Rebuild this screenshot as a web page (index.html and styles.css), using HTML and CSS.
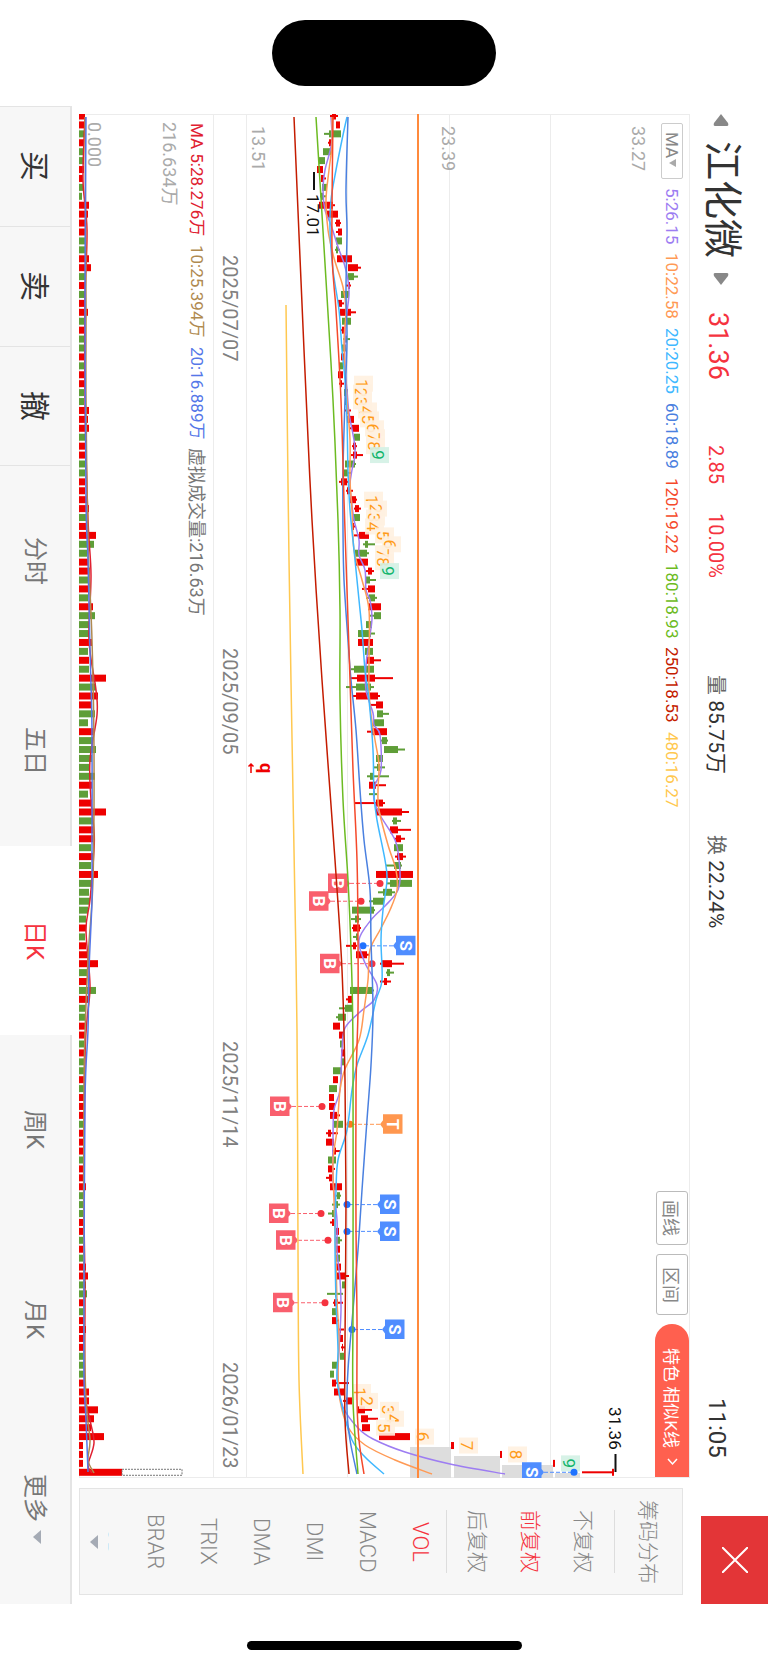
FILE: index.html
```html
<!DOCTYPE html>
<html lang="zh-CN">
<head>
  <meta charset="UTF-8" />
  <meta name="viewport" content="width=device-width, initial-scale=1" />
  <title>江化微 日K</title>
  <link rel="stylesheet" href="styles.css">
</head>
<body>
  <div class="island-area"><div class="island"></div></div>

  <main class="screen">
    <!-- Quote header -->
    <header class="header">
      <div class="quote">
        <button class="arrow" aria-label="上一只"><svg width="16" height="12" viewBox="0 0 16 12"><path d="M8 0 15 9Q16 12 14 12H2Q0 12 1 9Z" /></svg></button>
        <h1 class="name">江化微</h1>
        <button class="arrow" aria-label="下一只"><svg width="16" height="12" viewBox="0 0 16 12"><path d="M8 12 15 3Q16 0 14 0H2Q0 0 1 3Z" /></svg></button>
        <span class="price">31.36</span>
        <span class="change">2.85</span>
        <span class="percent">10.00%</span>
        <span class="stat"><small>量</small> 85.75万</span>
        <span class="stat turnover"><small>换</small> 22.24%</span>
        <time class="clock">11:05</time>
      </div>
      <button class="close" aria-label="关闭">
        <svg width="26" height="26" viewBox="0 0 26 26"><path d="M0 0 26 26M26 0 0 26" /></svg>
      </button>
    </header>

    <div class="workspace">
      <section class="chart">
        <!-- Price -->
        <div class="panel price-panel">
          <svg class="plot" id="pricePlot" viewBox="246 114 444 1364"></svg>
          <div class="legend">
            <label class="ma-picker">
              <select aria-label="指标"><option>MA</option></select>
              <svg width="7" height="8" viewBox="0 0 7 8"><path d="M0 4 7 0V8Z" /></svg>
            </label>
            <span class="ma5">5:26.15</span>
            <span class="ma10">10:22.58</span>
            <span class="ma20">20:20.25</span>
            <span class="ma60">60:18.89</span>
            <span class="ma120">120:19.22</span>
            <span class="ma180">180:18.93</span>
            <span class="ma250">250:18.53</span>
            <span class="ma480">480:16.27</span>
            <div class="tools">
              <button class="tool">画线</button>
              <button class="tool wide">区间</button>
              <button class="similar">特色 相似K线
                <svg width="7" height="11" viewBox="0 0 7 11"><path d="M6 1 1 5.500 6 10" transform="rotate(-90 3.500 5.500)" /></svg>
              </button>
            </div>
          </div>
        </div>

        <div class="dates">
          <time>2025/07/07</time>
          <time>2025/09/05</time>
          <time>2025/11/14</time>
          <time>2026/01/23</time>
        </div>

        <!-- Volume -->
        <div class="panel volume-panel">
          <svg class="plot" id="volumePlot" viewBox="79 114 135 1364"></svg>
          <div class="legend volume-legend">
            <span class="vol5">MA 5:28.276万</span>
            <span class="vol10">10:25.394万</span>
            <span class="vol20">20:16.889万</span>
            <span class="virtual">虚拟成交量:216.63万</span>
          </div>
        </div>
      </section>

      <!-- Indicator list -->
      <aside class="sidebar">
        <button class="side-item first">筹码分布</button>
        <div class="side-group">
          <button class="side-item">不复权</button>
          <button class="side-item on">前复权</button>
          <button class="side-item">后复权</button>
        </div>
        <div class="indicators">
          <button class="side-item on">VOL</button>
          <button class="side-item">MACD</button>
          <button class="side-item">DMI</button>
          <button class="side-item">DMA</button>
          <button class="side-item">TRIX</button>
          <button class="side-item">BRAR</button>
          <button class="side-item cut">CR</button>
        </div>
        <button class="more-down" aria-label="更多指标"><svg width="8" height="14" viewBox="0 0 8 14"><path d="M0 7 8 0V14Z" /></svg></button>
      </aside>
    </div>

    <nav class="bottom">
      <button class="trade">买</button>
      <button class="trade">卖</button>
      <button class="trade">撤</button>
      <button class="tab">分时</button>
      <button class="tab">五日</button>
      <button class="tab active">日K</button>
      <button class="tab">周K</button>
      <button class="tab">月K</button>
      <button class="tab">更多 <svg width="8" height="14" viewBox="0 0 8 14"><path d="M0 7 8 0V14Z" /></svg></button>
    </nav>
  </main>

  <div class="home-area"><div class="home"></div></div>

  <script src="chart.js"></script>
</body>
</html>
```

FILE: styles.css
```css
* {
  box-sizing: border-box;
}
body {
  margin: 0;
  min-height: 100vh;
  display: flex;
  flex-direction: column;
  background: #fff;
  color: #333;
  font-family: Roboto, "Noto Sans CJK SC", sans-serif;
}
button, select {
  writing-mode: inherit;
  text-orientation: inherit;
  font: inherit;
  color: inherit;
  background: none;
  border: 0;
  border-radius: 0;
  margin: 0;
  padding: 0;
  cursor: pointer;
}
svg {
  display: block;
  writing-mode: horizontal-tb;
}

/* phone edges */
.island-area {
  height: 106px;
  padding-top: 20px;
}
.island {
  width: 224px;
  height: 66px;
  margin: 0 auto;
  border-radius: 33px;
  background: #000;
}
.home-area {
  height: 61px;
  padding-top: 37px;
}
.home {
  width: 275px;
  height: 9px;
  margin: 0 auto;
  border-radius: 5px;
  background: #000;
}

/* the app runs sideways: inline = down, block = right to left */
.screen {
  flex: 1;
  display: flex;
  flex-direction: column;
  writing-mode: vertical-rl;
  text-orientation: sideways;
}

.header {
  display: flex;
  block-size: 67px;
}
.quote {
  flex: 1;
  display: flex;
  align-items: baseline;
  padding-block-start: 27px;
  padding-inline-start: 8px;
  line-height: 1;
}
.arrow {
  align-self: center;
}
.arrow svg {
  fill: #888;
}
.name {
  margin-block: 0;
  margin-inline: 15px;
  font-size: 39px;
  font-weight: 400;
}
.price {
  margin-inline-start: 27px;
  font-size: 27px;
}
.price, .change, .percent {
  color: #f5333f;
}
.change {
  margin-inline-start: 65px;
}
.change, .percent {
  font-size: 20px;
}
.percent {
  margin-inline-start: 29px;
}
.stat {
  margin-inline-start: 97px;
  font-size: 21px;
}
.stat small {
  font-size: 20px;
  color: #666;
}
.turnover {
  margin-inline-start: 61px;
}
.clock {
  margin-inline-start: auto;
  margin-inline-end: 58px;
  font-size: 24px;
}
.close {
  inline-size: 88px;
  display: flex;
  align-items: center;
  justify-content: center;
  background: #e33537;
}
.close svg {
  fill: none;
  stroke: #fff;
  stroke-width: 2;
}

.workspace {
  flex: 1;
  display: flex;
  gap: 10px;
  padding-inline: 8px 9px;
  padding-block: 11px 7px;
}
.chart {
  flex: 1;
  display: flex;
  flex-direction: column;
}
.panel {
  position: relative;
  border: 1px solid #ececec;
}
.price-panel {
  block-size: 444px;
}
.volume-panel {
  flex: 1;
}
.plot {
  position: absolute;
  inset: -1px;
  width: calc(100% + 2px);
  height: calc(100% + 2px);
}
.legend {
  position: relative;
  display: flex;
  align-items: center;
  gap: 9px;
  block-size: 34px;
  padding-inline-start: 8px;
  font-size: 17px;
  white-space: nowrap;
}
.ma-picker {
  display: flex;
  align-items: center;
  inline-size: 56px;
  block-size: 22px;
  padding-inline: 8px;
  border: 1px solid #ccc;
  border-radius: 2px;
  color: #888;
}
.ma-picker select {
  appearance: none;
}
.ma-picker svg {
  fill: #aaa;
}
.ma5 { color: #9d7df2; }
.ma10 { color: #ff9a55; }
.ma20 { color: #40b8ff; }
.ma60 { color: #4a80e0; }
.ma120 { color: #f5492a; }
.ma180 { color: #6cbb22; }
.ma250 { color: #c41c00; }
.ma480 { color: #ffc850; }
.tools {
  display: flex;
  align-items: center;
  gap: 9px;
  margin-inline-start: auto;
  color: #888;
}
.tool {
  inline-size: 54px;
  block-size: 32px;
  border: 1px solid #bbb;
  border-radius: 3px;
  font-size: 18px;
}
.tool.wide {
  inline-size: 61px;
}
.similar {
  display: flex;
  align-items: center;
  gap: 8px;
  inline-size: 153px;
  block-size: 34px;
  padding-inline-start: 24px;
  border-start-start-radius: 17px;
  border-end-start-radius: 17px;
  background: #ff604f;
  color: #fff;
}
.similar svg, .close svg {
  flex: none;
}
.similar svg {
  fill: none;
  stroke: #fff;
  stroke-width: 1.5;
  overflow: visible;
}
.dates {
  display: grid;
  grid-template-columns: 393px 393px 1fr auto;
  align-items: center;
  block-size: 32px;
  padding-inline: 140px 9px;
  border-inline: 1px solid #ececec;
  font-size: 20px;
  color: #808080;
}
.volume-legend {
  block-size: 30px;
}
.vol5 { color: #e02030; }
.vol10 { color: #b08a50; }
.vol20 { color: #5577e8; }
.virtual {
  color: #777;
  font-size: 18px;
}

.sidebar {
  inline-size: 107px;
  margin-block-start: 7px;
  display: flex;
  flex-direction: column;
  align-items: center;
  border: 1px solid #e4e4e4;
  background: #f7f7f7;
  color: #888;
  font-size: 21px;
  font-weight: 300;
}
.side-item {
  display: block;
  inline-size: 100%;
  block-size: 53px;
  padding-block-end: 2px;
  text-align: center;
}
.side-item.first {
  block-size: 67px;
}
.side-item.on {
  color: #f5333f;
}
.side-group {
  padding-block: 4px;
  border-block: 1px solid #ddd;
}
.indicators .side-item {
  font-size: 22px;
}
.indicators .cut {
  block-size: 20px;
  line-height: 58px;
  overflow: hidden;
}
.more-down {
  margin-block-start: 10px;
}
.more-down svg, .tab svg {
  fill: #a5abb5;
}

.bottom {
  display: flex;
  block-size: 72px;
  background: #f7f7f7;
  border-inline-start: 1px solid #e4e4e4;
}
.trade, .tab {
  border-block-start: 2px solid #e4e4e4;
  padding-block-end: 4px;
}
.trade {
  flex: 119 1 0;
  border-inline-end: 1px solid #e4e4e4;
  font-size: 30px;
}
.tab {
  flex: 190 1 0;
  display: flex;
  align-items: center;
  justify-content: center;
  gap: 8px;
  color: #777;
  font-size: 24px;
}
.tab.active {
  background: #fff;
  border-color: #fff;
  color: #f5333f;
}

/* chart marks */
.up { fill: #ee0000; }
.down { fill: #5f9e38; }
.grid { stroke: #ececec; }
.ma-line {
  fill: none;
  stroke-width: 1.5;
}
.axis-text {
  fill: #aaa;
  font-size: 18px;
}
.point-text {
  fill: #111;
  font-size: 17px;
}
.count-text {
  font-size: 17px;
  text-anchor: middle;
}
.flag-text {
  fill: #fff;
  font-size: 17px;
  font-weight: 700;
  text-anchor: middle;
}
.right-text {
  fill: #ee0000;
  font-size: 18px;
  font-weight: 700;
  text-anchor: middle;
}
```

FILE: chart.js
```js
const STEP = 8.923;
const FIRST = 116;
const rowY = i => FIRST + i * STEP;

// colour, body low, body high, wick low, wick high
const candles = `
r 332 336 330 338|r 336 340|g 329 341 324 341|r 329 332 328 333|g 323 331|g 319 325|r 317 323|r 321 324 321 326|g 322 327|g 321 323 320 326
r 319 333 319 335|r 326 338|r 336 340 335 341|r 338 342 336 342|g 336 342|g 336 338 335 340|r 337 352|r 348 358 348 361|g 348 354 348 358|r 348 350 346 351
g 341 349|r 338 342 338 344|r 340 351 340 356|g 342 351|r 342 344 341 346|g 345 347 343 350|g 342 346|r 341 344|g 339 343|r 338 343
r 340 342 339 344|g 344 348|g 345 348|r 347 349 345 351|r 347 354|r 352 359 350 359|g 354 360|r 353 356 352 357|r 353 357 351 363|g 345 355 345 356
g 344 348 344 352|r 341 347 339 348|r 347 350 346 353|r 350 356 349 357|r 355 359 354 361|g 353 360|r 352 354 351 356|r 359 369 354 369|g 365 368 363 375|g 355 367 355 369
r 355 368|r 368 372 366 374|g 366 370 366 376|r 368 375 362 375|g 369 375 366 377|r 368 381|g 374 381 369 381|g 366 372|g 358 371 358 375|r 358 373
g 365 373|r 366 374 366 381|g 354 374 351 374|r 357 375 350 393|g 356 371 346 374|r 356 378 352 380|r 376 383 371 383|g 377 383 377 389|g 373 384|r 372 387 367 387
g 382 387 381 388|g 384 398 384 405|g 376 383|g 377 380 374 385|g 370 374 367 389|r 369 376 369 386|g 373 375 369 377|r 376 383 355 385|r 376 402 376 409|g 393 397 392 401
r 390 398 389 411|r 396 401 394 405|g 394 403|r 397 403 395 406|g 394 401 386 402|r 376 413|g 390 412 387 412|g 383 392 378 395|g 373 384 369 384|g 352 374 352 375
g 355 359 351 361|r 353 360 352 361|g 356 358 353 358|r 353 356 346 357|r 356 367 356 370|r 382 392 380 404|g 387 390 386 394|r 384 387 380 391|g 350 373 350 374|r 348 352 346 353
g 345 353 339 353|g 338 346 336 346|r 333 340|r 339 343|g 340 342|r 341 344|g 342 344|g 333 342|r 333 338|g 329 337
r 329 334|r 329 335|r 330 337 330 340|g 334 343|r 328 331 326 338|r 326 334|r 334 336 332 340|g 328 336|r 328 333 328 335|r 329 332 326 332
r 330 342|g 337 340 336 341|g 335 338 332 340|g 332 334 328 335|r 332 334 330 335|r 336 339|g 336 340 336 342|r 336 340|g 336 340|r 336 341
r 337 346 337 349|g 342 346|g 335 336 327 343|r 334 338 333 343|g 332 336|r 332 337 332 339|r 340 341 338 344|r 339 343|r 342 343 341 345|g 340 344
g 332 338|g 330 334|r 332 336 332 349|r 334 345|r 346 352 343 352|r 358 365 358 372|r 361 368 361 378|r 362 370|r 379 410|r 451 454
r 500 502|r 553 555|r 612 614 582 614
`.trim().split(/[\n|]/).map(row => {
  const [color, ...n] = row.split(' ');
  const [lo, hi, wickLo = lo, wickHi = hi] = n.map(Number);
  return { up: color === 'r', lo, hi, wickLo, wickHi };
});

// right edge of every volume bar, the base is 79
const volumes = [
  85, 84, 84, 84, 84, 84, 84, 83, 83, 82, 89, 88, 86, 86, 85, 85, 89, 91, 85, 85,
  85, 85, 88, 85, 85, 84, 84, 84, 85, 84, 85, 84, 84, 89, 88, 89, 85, 85, 85, 85,
  85, 85, 85, 88, 89, 86, 86, 96, 94, 87, 88, 90, 89, 88, 88, 93, 95, 90, 89, 92,
  88, 89, 89, 106, 96, 98, 92, 95, 88, 94, 93, 96, 92, 89, 95, 92, 88, 92, 106, 93,
  94, 95, 91, 93, 91, 98, 92, 89, 90, 88, 86, 86, 85, 86, 88, 98, 88, 87, 96, 88,
  86, 86, 85, 85, 84, 84, 84, 84, 84, 84, 84, 84, 85, 84, 84, 84, 84, 84, 84, 84,
  86, 83, 83, 83, 83, 83, 83, 83, 83, 86, 88, 86, 87, 85, 85, 85, 86, 85, 85, 84,
  84, 84, 86, 89, 89, 98, 94, 91, 104, 83, 83, 83, 122
];

const priceLines = [
  ['#ffc850', '286,305 289,560 294,850 297,1030 298,1250 299,1380 303,1474'],
  ['#9d7df2', '331,117 332,140 329,155 325,170 323,190 325,210 331,225 338,247 344,263 348,280 349,295 346,320 345,340 345,370 347,390 349,413 354,440 355,455 352,470 350,485 352,505 354,520 359,540 359,555 365,570 366,590 370,600 372,618 370,635 368,650 366,665 366,690 373,713 374,725 380,735 381,770 375,785 374,800 380,815 395,840 399,860 400,880 397,892 386,905 371,920 359,940 365,963 377,985 374,1000 360,1012 345,1028 342,1050 340,1090 334,1110 333,1140 333,1180 337,1220 337,1250 340,1280 341,1310 339,1350 338,1380 343,1407 358,1428 373,1439 405,1452 450,1464 505,1474'],
  ['#ff9a55', '332,117 332,145 329,170 326,200 328,230 334,258 343,287 346,310 344,340 345,370 347,400 350,440 350,480 352,510 354,550 362,580 369,610 369,660 369,690 371,715 375,740 379,765 378,790 379,810 388,845 396,870 397,890 390,910 380,930 370,950 368,980 364,1010 359,1040 345,1069 340,1090 337,1130 333,1160 334,1200 336,1260 337,1300 339,1340 338,1370 340,1400 348,1427 365,1445 395,1460 432,1474'],
  ['#40b8ff', '347,117 343,135 336,170 331,200 330,230 333,270 339,310 342,350 345,380 347,420 348,470 350,510 354,550 359,600 362,630 365,670 369,700 373,750 374,795 377,820 385,860 387,880 383,910 381,940 382,980 376,1000 368,1035 357,1065 352,1090 347,1130 338,1160 336,1190 335,1240 336,1300 338,1350 337,1380 343,1410 352,1440 365,1457 384,1474'],
  ['#4a80e0', '348,117 346,190 347,230 346,290 347,340 345,400 343,470 343,530 344,580 348,640 351,680 356,730 360,790 364,840 370,890 371,940 373,1010 371,1065 367,1120 362,1190 358,1250 353,1310 348,1370 347,1410 350,1440 357,1474'],
  ['#f5492a', '333,117 332,250 336,310 341,400 344,500 347,590 350,680 353,770 357,860 358,940 358,1010 356,1090 356,1230 357,1320 357,1400 359,1440 364,1474'],
  ['#6cbb22', '316,117 326,280 333,400 338,520 340,610 340,700 343,800 348,880 351,950 353,1050 353,1300 353,1400 358,1474'],
  ['#c41c00', '294,117 304,350 312,520 322,680 335,860 342,970 345,1080 346,1200 345,1340 345,1420 349,1474']
];

const volumeLines = [
  ['#e02030', '85,117 83,180 87,230 85,300 85,400 88,520 91,575 89,640 96,690 97,715 90,760 91,800 94,830 94,850 90,900 86,930 90,985 87,1020 85,1060 84,1200 85,1290 85,1390 90,1420 94,1443 88,1465 92,1473'],
  ['#b08a50', '85,117 86,300 86,400 88,540 92,640 94,750 93,880 88,960 84,1080 84,1300 86,1400 90,1440 88,1460 94,1473'],
  ['#5577e8', '86,117 85,300 86,500 88,560 90,650 92,730 92,850 92,900 89,970 88,1030 85,1100 84,1300 84,1380 86,1420 88,1472']
];

// nine-count runs: first candle and the left edge of each box
const counts = [
  [30, [354, 353, 353, 358, 360, 365, 366, 366, 370]],
  [43, [364, 368, 366, 365, 375, 382, 375, 375, 380]],
  [143, [352, 359, 380, 385, 376, 415, 459, 508, 561]]
];

// letter, candle, box left edge, dot
const flags = [
  ['B', 86, 328, 380], ['B', 88, 309, 361], ['S', 93, 396, 363], ['B', 95, 320, 372],
  ['B', 111, 270, 322], ['T', 113, 383, 350], ['S', 122, 380, 347], ['B', 123, 269, 321],
  ['S', 125, 380, 347], ['B', 126, 276, 328], ['B', 133, 273, 325], ['S', 136, 385, 352],
  ['S', 152, 522, 574]
];
const flagColors = { B: '#f95f6d', S: '#4f8dff', T: '#ff974f' };
const dotColors = { B: '#f5333f', S: '#1f72ff', T: '#ff7a1a' };

// smooth curve through a list of points
function curve(text) {
  const p = text.split(' ').map(s => s.split(',').map(Number));
  let d = `M${p[0]}`;
  for (let i = 0; i < p.length - 1; i++) {
    const a = p[i - 1] || p[i], b = p[i], c = p[i + 1], e = p[i + 2] || c;
    d += `C${b[0] + (c[0] - a[0]) / 6},${b[1] + (c[1] - a[1]) / 6} ${c[0] - (e[0] - b[0]) / 6},${c[1] - (e[1] - b[1]) / 6} ${c}`;
  }
  return d;
}
const drawLines = lines => lines.map(([color, pts]) => `<path class="ma-line" stroke="${color}" d="${curve(pts)}"/>`).join('');
const sideText = (x, y, cls, text, fill = '') => `<text class="${cls}" ${fill && `fill="${fill}"`} transform="translate(${x} ${y}) rotate(90)">${text}</text>`;

function drawPrice() {
  let s = '';
  [347, 449, 550].forEach(x => s += `<path class="grid" d="M${x}.5 114V1478"/>`);

  // open gaps of the last days
  [[410, 451, 1447], [454, 500, 1456], [502, 553, 1465], [555, 580, 1473]].forEach(([a, b, y]) => {
    s += `<rect x="${a}" y="${y}" width="${b - a}" height="${1478 - y}" fill="#ddd"/>`;
  });

  candles.forEach((c, i) => {
    const y = rowY(i);
    const cls = c.up ? 'up' : 'down';
    s += `<rect class="${cls}" x="${c.lo}" y="${y - 3.5}" width="${c.hi - c.lo}" height="7"/>`;
    s += `<rect class="${cls}" x="${c.wickLo}" y="${y - 1}" width="${c.wickHi - c.wickLo}" height="2"/>`;
  });

  counts.forEach(([start, boxes]) => boxes.forEach((x, k) => {
    const y = rowY(start + k);
    const last = k === 8;
    s += `<rect x="${x}" y="${y - 8}" width="19" height="16" fill="${last ? '#d3f1e4' : '#fff1e0'}" opacity=".9"/>`;
    s += sideText(x + 2, y, 'count-text', k + 1, last ? '#10b56c' : '#ff9c1a');
  }));

  flags.forEach(([letter, i, x, dot]) => {
    const y = rowY(i);
    const right = dot > x;
    const tip = right ? x + 22 : x - 3;
    const edge = right ? x + 19 : x;
    s += `<path d="M${tip} ${y}H${dot}" stroke="${flagColors[letter]}" stroke-dasharray="4 2"/>`;
    s += `<circle cx="${dot}" cy="${y}" r="3.5" fill="${dotColors[letter]}"/>`;
    s += `<path d="M${x} ${y - 10}h19.500v19.500h-19.500zM${edge} ${y - 4}L${tip} ${y}L${edge} ${y + 4}z" fill="${flagColors[letter]}"/>`;
    s += sideText(x + 4, y, 'flag-text', letter);
  });

  s += drawLines(priceLines);
  s += '<path d="M418 114V1478" stroke="#ff8a3c" stroke-width="2"/>';

  s += sideText(632, 126, 'axis-text', '33.27');
  s += sideText(442, 126, 'axis-text', '23.39');
  s += sideText(252, 126, 'axis-text', '13.51');
  s += '<path d="M314 172V190M615.500 1454V1472" stroke="#111" stroke-width="2"/>';
  s += sideText(307, 194, 'point-text', '17.01');
  s += sideText(609, 1407, 'point-text', '31.36');
  s += '<path d="M251 764v9M248.500 766.500l2.500-2.500 2.500 2.500" fill="none" stroke="#ee0000" stroke-width="1.500"/>';
  s += sideText(260, 768, 'right-text', 'q');
  document.getElementById('pricePlot').innerHTML = s;
}

function drawVolume() {
  let s = sideText(88, 122, 'axis-text', '0.000') + sideText(163, 122, 'axis-text', '216.634万');
  volumes.forEach((v, i) => {
    s += `<rect class="${candles[i].up ? 'up' : 'down'}" x="79" y="${rowY(i) - 3.5}" width="${v - 79}" height="7"/>`;
  });
  s += `<rect x="122" y="${rowY(152) - 3}" width="60" height="6" fill="none" stroke="#777" stroke-dasharray="2 1"/>`;
  document.getElementById('volumePlot').innerHTML = s + drawLines(volumeLines);
}

drawPrice();
drawVolume();
```
